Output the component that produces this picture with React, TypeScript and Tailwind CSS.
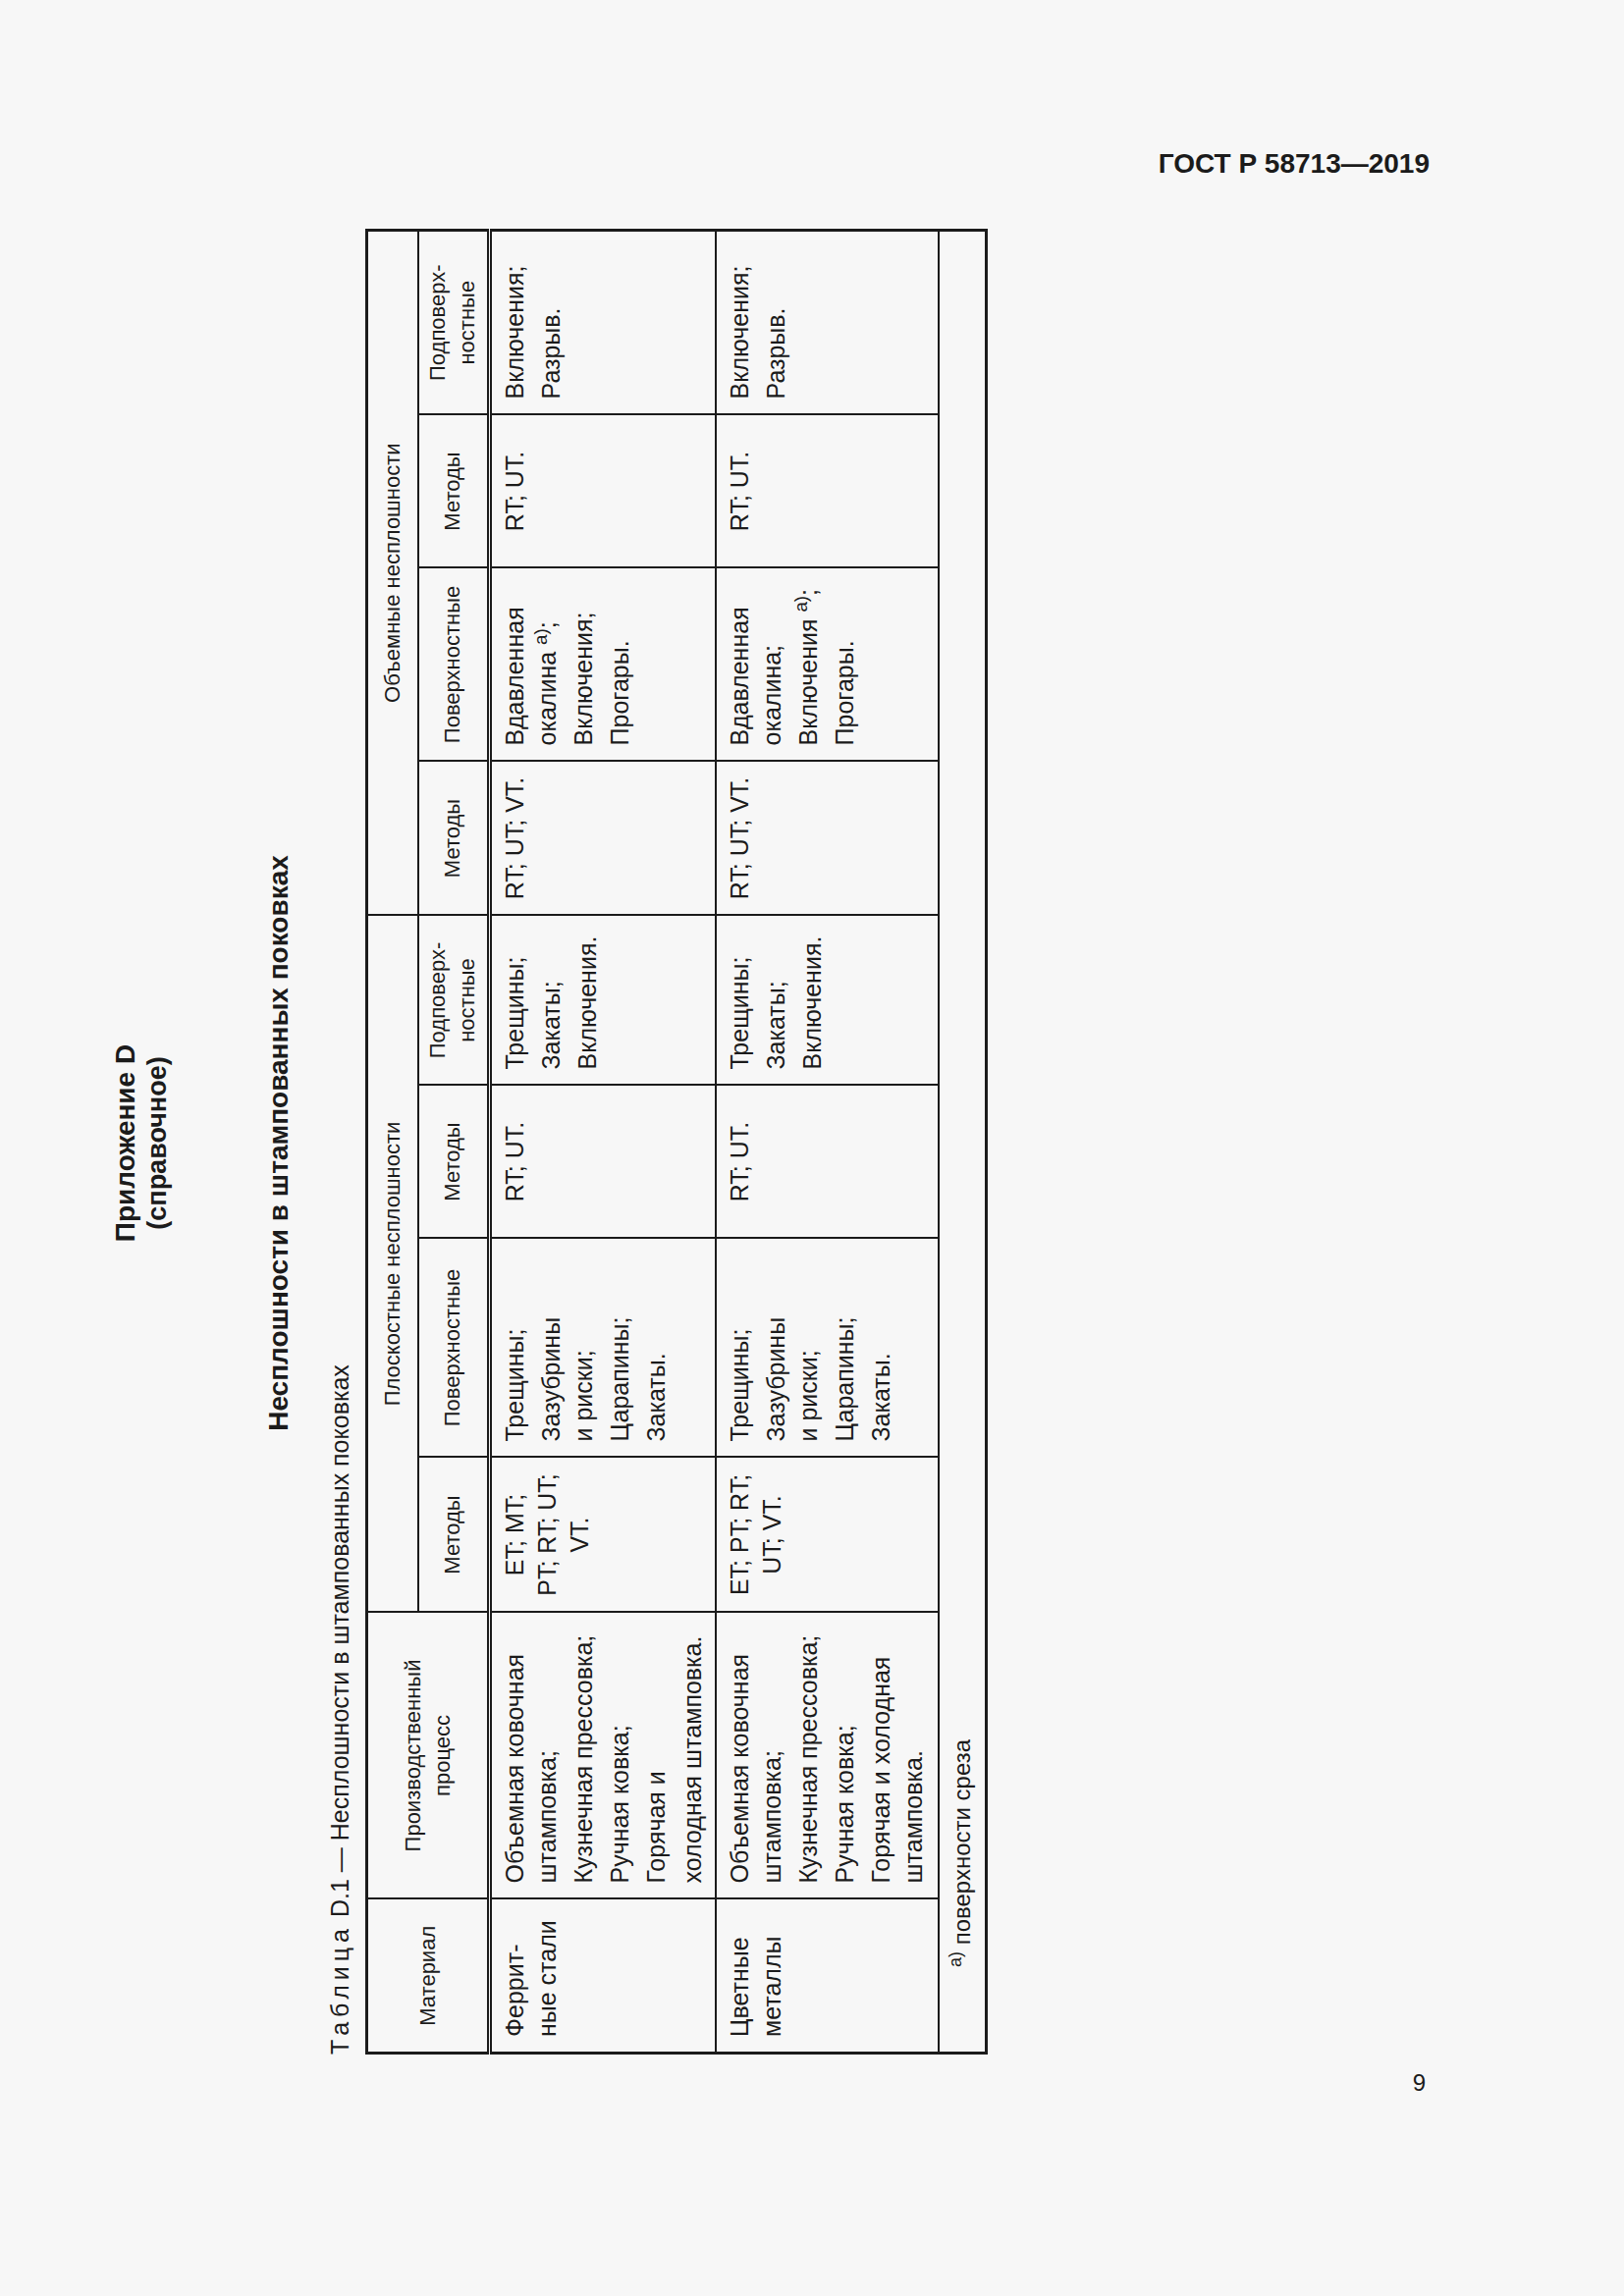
const font = "font-['Liberation_Sans',Arial,sans-serif]";

type Cell = { paras: string[][]; center?: boolean };

const cols = [157, 292, 158, 223, 156, 173, 157, 197, 156, 188];

const rows: { h: string; cells: Cell[] }[] = [
  {
    h: "h-[230px]",
    cells: [
      { paras: [["Феррит-", "ные стали"]] },
      {
        paras: [
          ["Объемная ковочная", "штамповка;"],
          ["Кузнечная прессовка;"],
          ["Ручная ковка;"],
          ["Горячая и"],
          ["холодная штамповка."],
        ],
      },
      { paras: [["ET; MT;", "PT; RT; UT;", "VT."]], center: true },
      { paras: [["Трещины;"], ["Зазубрины", "и риски;"], ["Царапины;"], ["Закаты."]] },
      { paras: [["RT; UT."]], center: true },
      { paras: [["Трещины;"], ["Закаты;"], ["Включения."]] },
      { paras: [["RT; UT; VT."]], center: true },
      { paras: [["Вдавленная", "окалина @;"], ["Включения;"], ["Прогары."]] },
      { paras: [["RT; UT."]], center: true },
      { paras: [["Включения;"], ["Разрыв."]] },
    ],
  },
  {
    h: "h-[227px]",
    cells: [
      { paras: [["Цветные", "металлы"]] },
      {
        paras: [
          ["Объемная ковочная", "штамповка;"],
          ["Кузнечная прессовка;"],
          ["Ручная ковка;"],
          ["Горячая и холодная", "штамповка."],
        ],
      },
      { paras: [["ET; PT; RT;", "UT; VT."]], center: true },
      { paras: [["Трещины;"], ["Зазубрины", "и риски;"], ["Царапины;"], ["Закаты."]] },
      { paras: [["RT; UT."]], center: true },
      { paras: [["Трещины;"], ["Закаты;"], ["Включения."]] },
      { paras: [["RT; UT; VT."]], center: true },
      { paras: [["Вдавленная", "окалина;"], ["Включения @;"], ["Прогары."]] },
      { paras: [["RT; UT."]], center: true },
      { paras: [["Включения;"], ["Разрыв."]] },
    ],
  },
];

// "@" marks the footnote reference a)
function Line({ text }: { text: string }) {
  const parts = text.split("@");
  if (parts.length === 1) return <div className="whitespace-nowrap">{text}</div>;
  return (
    <div className="whitespace-nowrap">
      {parts[0]}
      <sup>а)</sup>
      {parts[1]}
    </div>
  );
}

const th = "border-2 border-[#1b1b1b] font-normal text-[22px] leading-[30px] text-center align-middle";
const td = "border-2 border-[#1b1b1b] align-top text-[25px] leading-[33px] pt-[7px]";

function DiscontinuityTable() {
  return (
    <table className="w-[1857px] table-fixed border-collapse border-[3px] border-[#1b1b1b]">
      <colgroup>
        {cols.map((w, i) => (
          <col key={i} style={{ width: w }} />
        ))}
      </colgroup>
      <thead>
        <tr className="h-[52px]">
          <th rowSpan={2} className={`${th} border-b-[5px] border-double`}>
            Материал
          </th>
          <th rowSpan={2} className={`${th} border-b-[5px] border-double`}>
            Производственный
            <br />
            процесс
          </th>
          <th colSpan={4} className={th}>
            Плоскостные несплошности
          </th>
          <th colSpan={4} className={th}>
            Объемные несплошности
          </th>
        </tr>
        <tr className="h-[73px]">
          {["Методы", "Поверхностные", "Методы", "Подповерх-|ностные", "Методы", "Поверхностные", "Методы", "Подповерх-|ностные"].map(
            (t, i) => (
              <th key={i} className={`${th} border-b-[5px] border-double`}>
                {t.split("|").map((s, j) => (
                  <div key={j}>{s}</div>
                ))}
              </th>
            )
          )}
        </tr>
      </thead>
      <tbody>
        {rows.map((r, ri) => (
          <tr key={ri} className={r.h}>
            {r.cells.map((c, ci) => (
              <td key={ci} className={`${td} ${c.center ? "text-center px-[4px]" : "text-left px-[15px]"}`}>
                {c.paras.map((p, pi) => (
                  <div key={pi} className="mb-[4px]">
                    {p.map((l, li) => (
                      <Line key={li} text={l} />
                    ))}
                  </div>
                ))}
              </td>
            ))}
          </tr>
        ))}
        <tr className="h-[49px]">
          <td colSpan={10} className="border-2 border-[#1b1b1b] text-[24px] leading-[30px] pl-[86px] align-middle">
            <sup>а)</sup> поверхности среза
          </td>
        </tr>
      </tbody>
    </table>
  );
}

export default function App() {
  return (
    <div className={`w-[1654px] h-[2339px] bg-[#f7f7f7] text-[#1b1b1b] ${font} flex flex-col`}>
      <div className="pt-[150px] pr-[198px] text-right text-[28px] font-bold leading-[34px]">ГОСТ Р 58713—2019</div>

      <div className="relative mt-[52px] ml-[110px] w-[894px] h-[1857px]">
        <div className="absolute left-0 top-0 w-[1857px] h-[894px] origin-top-left translate-y-[1857px] -rotate-90 flex flex-col">
          <div className="pt-[2px] text-center font-bold leading-[32px]">
            <div className="text-[28px]">Приложение D</div>
            <div className="text-[27px]">(справочное)</div>
          </div>
          <div className="mt-[92px] text-center font-bold text-[28px] leading-[32px]">
            Несплошности в штампованных поковках
          </div>
          <div className="mt-[31px] text-[25px] leading-[30px] whitespace-nowrap">
            <span className="tracking-[5px]">Таблица</span> D.1 — Несплошности в штампованных поковках
          </div>
          <div className="mt-[11px]">
            <DiscontinuityTable />
          </div>
        </div>
      </div>

      <div className="mt-[15px] pr-[202px] text-right text-[24px] leading-[28px]">9</div>
    </div>
  );
}
